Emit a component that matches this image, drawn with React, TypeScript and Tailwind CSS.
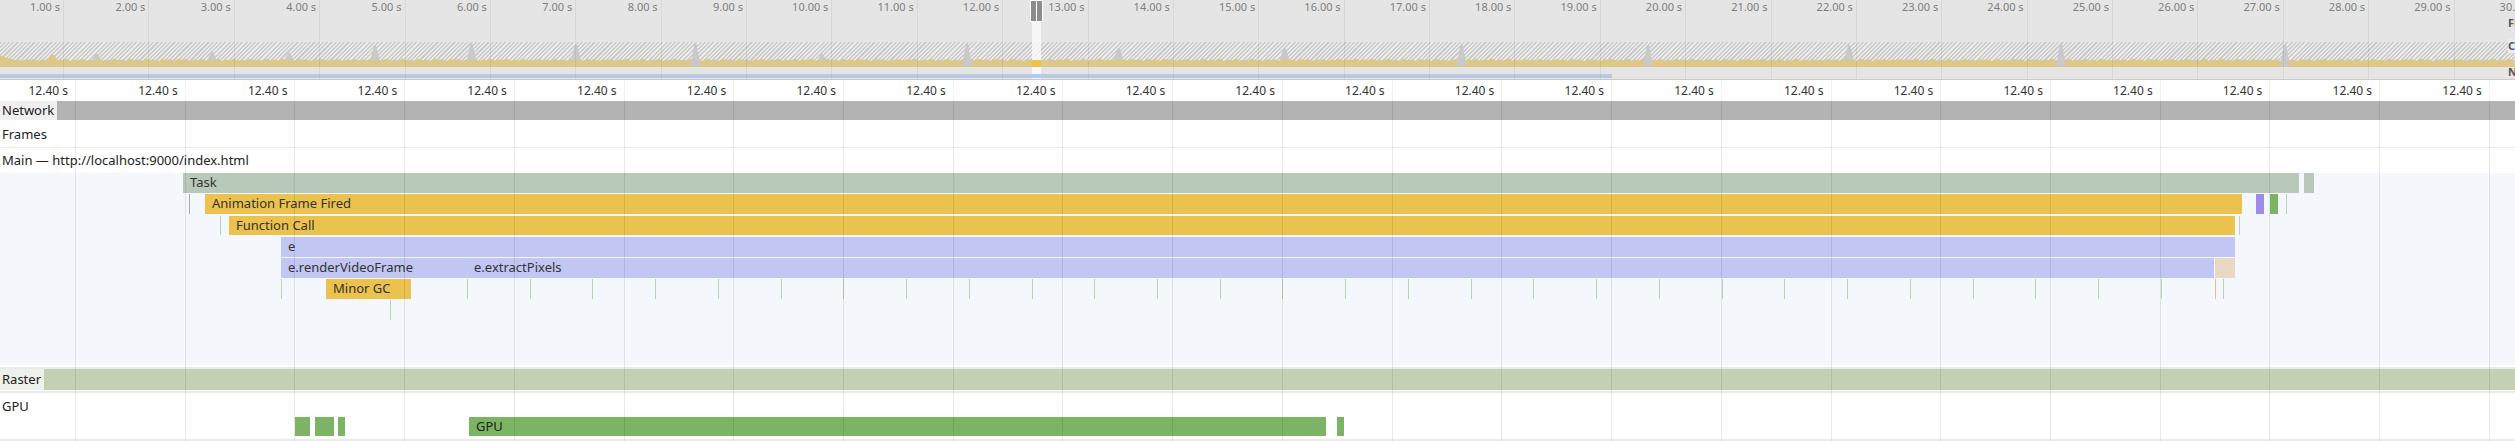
import React from "react";

type Bar = { x1: number; x2: number; row: number; color: string; text?: string };

const ROW_TOP = [0, 21, 42.5, 64, 85, 106, 127];

const bars: Bar[] = [
  { x1: 183, x2: 2299, row: 0, color: "#b8c9b9", text: "Task" },
  { x1: 2304, x2: 2314, row: 0, color: "#b8c9b9" },
  { x1: 205, x2: 2242, row: 1, color: "#ebc24d", text: "Animation Frame Fired" },
  { x1: 2256, x2: 2264, row: 1, color: "#9d8ce8" },
  { x1: 2270, x2: 2278, row: 1, color: "#7db463" },
  { x1: 229, x2: 2234.5, row: 2, color: "#ebc24d", text: "Function Call" },
  { x1: 281, x2: 2234.5, row: 3, color: "#c1c6f3", text: "e" },
  { x1: 281, x2: 466.5, row: 4, color: "#c1c6f3", text: "e.renderVideoFrame" },
  { x1: 467, x2: 2214, row: 4, color: "#c1c6f3", text: "e.extractPixels" },
  { x1: 2214.5, x2: 2234.5, row: 4, color: "#e9d8c2" },
  { x1: 326, x2: 411, row: 5, color: "#ebc24d", text: "Minor GC" },
];

const ticks: { x: number; row: number; color: string }[] = [
  { x: 189, row: 1, color: "#a89be8" },
  { x: 2285.5, row: 1, color: "#b5d6b5" },
  { x: 220, row: 2, color: "#b5d6b5" },
  { x: 2239, row: 2, color: "#b5d6b5" },
  { x: 281, row: 5, color: "#b5d6b5" },
  { x: 2215, row: 5, color: "#e3c27a" },
  { x: 390, row: 6, color: "#b5d6b5" },
  ...Array.from({ length: 29 }, (_, k) => ({ x: 467 + 62.73 * k, row: 5, color: "#b5d6b5" })),
];

const gpuBlocks = [
  { x1: 295, x2: 310 },
  { x1: 315, x2: 333.5 },
  { x1: 337.5, x2: 340.5 },
  { x1: 469, x2: 1326, text: "GPU" },
  { x1: 1337, x2: 1343 },
];

// spikes on the overview cpu graph: x, top (local y), dip through yellow
const spikes = [
  { x: 96.5, top: 12, dip: false },
  { x: 212, top: 10, dip: false },
  { x: 289, top: 11, dip: false },
  { x: 375, top: 4, dip: false },
  { x: 471.5, top: 2, dip: false },
  { x: 576, top: 3, dip: false },
  { x: 695.5, top: 2, dip: true },
  { x: 822, top: 12, dip: false },
  { x: 967, top: 2, dip: true },
  { x: 1118.6, top: 6, dip: false },
  { x: 1284.6, top: 6, dip: false },
  { x: 1461.6, top: 2, dip: true },
  { x: 1648, top: 3, dip: true },
  { x: 1849, top: 3, dip: false },
  { x: 2061, top: 2, dip: true },
  { x: 2285, top: 2, dip: true },
];

function cpuPath() {
  const pts: string[] = [];
  for (let x = 0; x <= 2515; x += 3) {
    let y = 17.8 + 0.9 * Math.sin(x * 1.31) + 0.5 * Math.sin(x * 0.37);
    if (x < 10) y = 13 + x * 0.4;
    if (Math.abs(x - 52) < 4) y = 13;
    pts.push(`${x},${y.toFixed(1)}`);
  }
  return `M0,25 L${pts.join(" L")} L2515,25 Z`;
}

function Spike({ x, top, dip }: { x: number; top: number; dip: boolean }) {
  const base = dip ? 24 : 19;
  return <polygon points={`${x - 5},${base} ${x - 1},${top} ${x + 1},${top} ${x + 5},${base}`} fill="#c9c9c9" />;
}

function Overview() {
  return (
    <div className="relative h-[80px] border-b border-[#cbcbcb] bg-[#e5e5e5]">
      <div className="flex h-full flex-col">
        <div className="h-[42px]" />
        <div className="relative h-[25px] bg-[repeating-linear-gradient(135deg,#cdcdcd_0px,#cdcdcd_1.5px,#e9e9e9_1.5px,#e9e9e9_3px)]">
          <svg className="absolute inset-0" width={2515} height={25}>
            {spikes.filter((s) => !s.dip).map((s) => <Spike key={s.x} {...s} />)}
            <path d={cpuPath()} fill="#dfc787" />
            {spikes.filter((s) => s.dip).map((s) => <Spike key={s.x} {...s} />)}
          </svg>
        </div>
        <div className="h-[7px]" />
        <div className="h-[4px] w-[1612px] bg-[#b9c8e3]" />
      </div>

      {/* second ticks */}
      <div className="absolute inset-0 flex">
        {Array.from({ length: 30 }, (_, i) => (
          <div
            key={i}
            className={`${i === 0 ? "w-[64px]" : "w-[85.38px]"} shrink-0 border-r border-black/[0.06] pr-[3px] text-right text-[11px] leading-[14px] text-[#7f7f7f] whitespace-nowrap`}
          >
            {i + 1}.00 s
          </div>
        ))}
      </div>

      {/* right-edge labels, clipped */}
      <div className="absolute left-[2508px] top-0 flex h-full flex-col pt-[16px] text-[11px] font-bold leading-[14px] text-[#555]">
        <span>FPS</span>
        <span className="mt-[9px] bg-[#ececec]">CPU</span>
        <span className="mt-[12px]">NET</span>
      </div>

      {/* selection window */}
      <div className="absolute left-[1030px] top-0 flex h-[79px] w-[13px] flex-col items-center">
        <div className="flex h-[22px] gap-[1px] border border-white bg-white">
          <div className="w-[5px] bg-[#8c8c8c]" />
          <div className="w-[5px] bg-[#8c8c8c]" />
        </div>
        <div className="flex w-[9px] flex-1 flex-col bg-white/70">
          <div className="h-[38px]" />
          <div className="h-[7px] bg-[#f2c14b]" />
          <div className="h-[7px]" />
          <div className="h-[4px] bg-[#a9cdf4]" />
        </div>
      </div>
    </div>
  );
}

function Ruler() {
  return (
    <div className="flex h-[21px] bg-white">
      {Array.from({ length: 24 }, (_, i) => (
        <div
          key={i}
          className={`${i === 0 ? "w-[76px]" : "w-[109.73px]"} shrink-0 border-r border-black/[0.05] pr-[7px] text-right text-[12px] leading-[21px] text-[#333] whitespace-nowrap`}
        >
          12.40 s
        </div>
      ))}
    </div>
  );
}

function FlameChart() {
  return (
    <div className="relative h-[192px] bg-[#f4f8fd]">
      {bars.map((b, i) => (
        <div
          key={i}
          className="absolute overflow-hidden whitespace-nowrap pl-[7px] text-[13px] leading-[19.5px] text-[#333]"
          style={{ left: b.x1, width: b.x2 - b.x1, top: ROW_TOP[b.row], height: 19.5, background: b.color }}
        >
          {b.text}
        </div>
      ))}
      {ticks.map((t, i) => (
        <div
          key={i}
          className="absolute w-px"
          style={{ left: t.x, top: ROW_TOP[t.row], height: 19.5, background: t.color }}
        />
      ))}
    </div>
  );
}

export default function App() {
  return (
    <div className="relative h-[441px] w-[2515px] overflow-hidden bg-white font-['Noto_Sans',sans-serif] text-[#222]">
      <Overview />
      <Ruler />

      <div className="flex h-[19px] items-center bg-[#b3b3b3]">
        <span className="h-full bg-[#efefef] pl-[2px] pr-[3px] text-[13px] leading-[19px]">Network</span>
      </div>
      <div className="flex h-[28px] items-center border-b border-[#ececec] pl-[2px] pt-[2px] text-[13px]">Frames</div>
      <div className="flex h-[25px] items-center pl-[2px] text-[13px]">Main — http://localhost:9000/index.html</div>

      <FlameChart />

      <div className="h-[2px] bg-white" />
      <div className="h-[2px] bg-[#ebebeb]" />
      <div className="flex h-[21px] items-center bg-[#c3d0b1]">
        <span className="h-full bg-[#eef1e9] pl-[2px] pr-[3px] text-[13px] leading-[21px]">Raster</span>
      </div>
      <div className="h-px bg-white" />
      <div className="h-[2px] bg-[#ebebeb]" />

      <div className="relative h-[46px]">
        <div className="pl-[2px] pt-[4px] text-[13px] leading-[18px]">GPU</div>
        {gpuBlocks.map((g, i) => (
          <div
            key={i}
            className="absolute top-[24px] h-[19px] overflow-hidden whitespace-nowrap bg-[#7db463] pl-[7px] text-[13px] leading-[19px] text-[#222]"
            style={{ left: g.x1, width: g.x2 - g.x1 }}
          >
            {g.text}
          </div>
        ))}
      </div>
      <div className="h-[2px] bg-[#ebebeb]" />

      {/* time grid over the tracks */}
      <div className="pointer-events-none absolute top-[101px] bottom-0 left-0 flex">
        {Array.from({ length: 23 }, (_, i) => (
          <div
            key={i}
            className={`${i === 0 ? "w-[76px]" : "w-[109.73px]"} h-full shrink-0 border-r border-black/[0.09]`}
          />
        ))}
      </div>
    </div>
  );
}
